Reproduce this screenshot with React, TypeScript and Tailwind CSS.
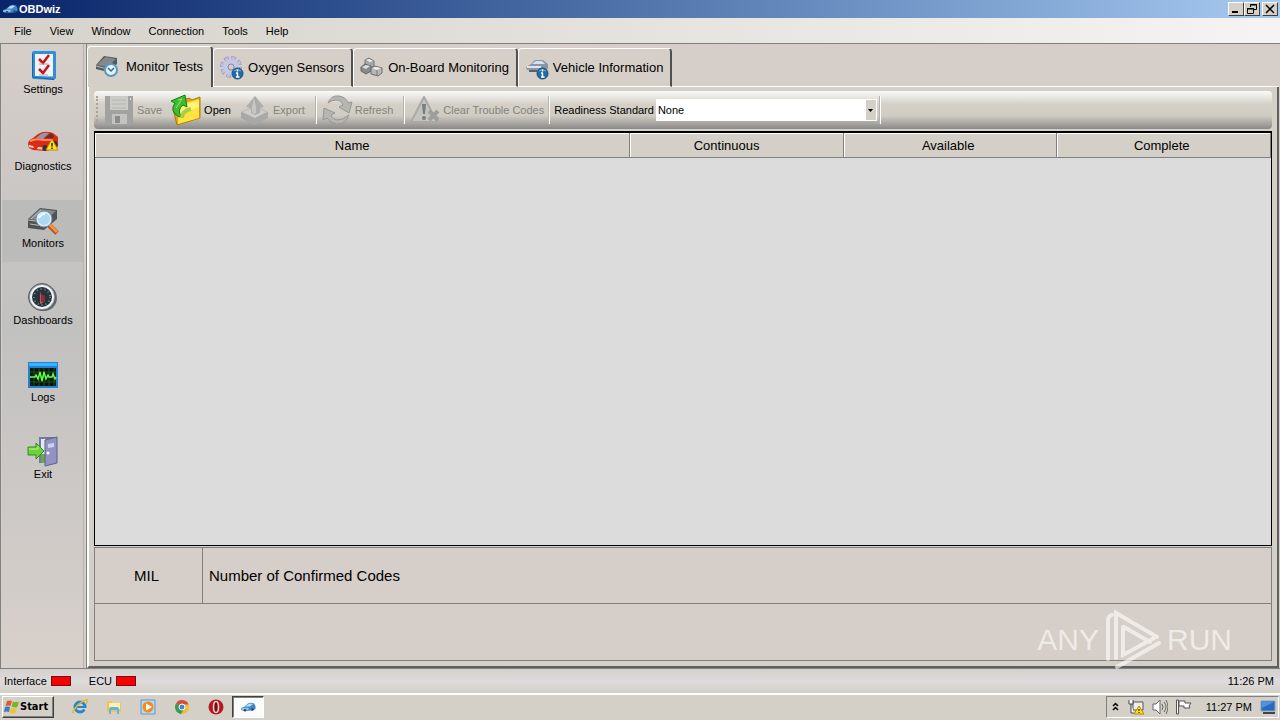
import type { ReactNode } from 'react'
import clsx from 'clsx'

const CarIcon = ({ className }: { className?: string }) => (
	<svg viewBox="0 0 16 16" className={className} aria-hidden="true">
		<path d="M1 9 4 8 8 4.500q3-1.500 6 0L15.500 7v3l-3 1.500-8 .5-3.500-1z" fill="#3f86c8" />
		<path d="m5 7.500 3.500-2.500q2-.8 4.500 0l-3 2.500z" fill="#b9dcf5" />
		<path d="m1 9.500 5-1 3 .5-1 2-4 .5-3-1z" fill="#8fc1ea" />
		<circle cx="5" cy="11.300" r="1.300" fill="#274a70" />
		<circle cx="12.500" cy="10.500" r="1.300" fill="#274a70" />
	</svg>
)

const SettingsIcon = () => (
	<svg viewBox="0 0 32 32" className="h-8 w-8" aria-hidden="true">
		<path d="M7 1h20q2 0 2 2v25l-2 2-20-1q-2 0-2-2V3q0-2 2-2z" fill="#2f8fd8" />
		<path d="M5.500 4v23l21.500 2.500" fill="none" stroke="#1766a8" />
		<path d="M8 4h18v22.500L8 26z" fill="#f1f2f6" />
		<path d="m12 9 4 4 6-8M12 19l4 4 6-8" fill="none" stroke="#c4161c" strokeWidth="2.500" />
		<path d="M12 14h9M12 25h9" stroke="#a9a9b2" />
	</svg>
)

const DiagnosticsIcon = () => (
	<svg viewBox="0 0 32 32" className="h-8 w-8" aria-hidden="true">
		<path d="M1 17q0-4 5-6l5-4q6-4 15-1l5 4v9l-4 3-8 2-13-1-4-2z" fill="#d92c15" />
		<path d="m9 11 5-4q5-2 8-1l-6 6z" fill="#8d9aaa" />
		<path d="m18 11 6-5 3 3-1 2z" fill="#6d2a28" />
		<path d="M3 14q6-3 14-1l7 0" fill="none" stroke="#ff8b66" strokeWidth="2" />
		<path d="m2 18 4 1 1 2-5-1zM11 20l5 .5-1 2-5-.5z" fill="#ffd7c0" />
		<ellipse cx="28" cy="18" rx="2.500" ry="4" fill="#333" />
		<ellipse cx="18" cy="21" rx="2.500" ry="3" fill="#333" />
		<path d="m25 12 6 11H19z" fill="#ffe51c" stroke="#c98b00" />
		<path d="M25 16v3.500M25 20.500v1.500" stroke="#222" strokeWidth="1.500" />
	</svg>
)

const MonitorsIcon = () => (
	<svg viewBox="0 0 32 32" className="h-8 w-8" aria-hidden="true">
		<path d="M1 15 13 4l17 2v9l-13 11-16-2z" fill="#505355" />
		<path d="M2 15 13 5l16 2-11 10z" fill="#85898b" />
		<path d="m4 15 10-9M1 16l16 2M3 20l13 2" stroke="#bbb" />
		<path d="m22 21 8 8" stroke="#b8501a" strokeWidth="5" />
		<path d="m22 20 8 8" stroke="#f69246" strokeWidth="3" />
		<circle cx="17" cy="15" r="7" fill="#a9d8f2" stroke="#e1e9ed" strokeWidth="2" />
		<circle cx="17" cy="15" r="8" fill="none" stroke="#6892ad" />
		<path d="M12 14q2-4 6-4" fill="none" stroke="#fff" strokeWidth="2" />
	</svg>
)

const DashboardsIcon = () => (
	<svg viewBox="0 0 32 32" className="h-8 w-8" aria-hidden="true">
		<circle cx="17" cy="17" r="13" fill="#646b70" />
		<circle cx="15" cy="16" r="13.500" fill="#929b9f" stroke="#555d62" />
		<circle cx="15" cy="16" r="11" fill="#27343c" stroke="#eef2f3" strokeWidth="2" />
		<circle cx="15" cy="16" r="8" fill="none" stroke="#72858e" strokeDasharray="1 3" strokeWidth="2" />
		<path d="m13 10 3 12-3 1z" fill="#da4c57" />
		<path d="M14 13v8h4v-6z" fill="#7b3442" />
	</svg>
)

const LogsIcon = () => (
	<svg viewBox="0 0 32 32" className="h-8 w-8" aria-hidden="true">
		<path d="M1 4h30v26H1z" fill="#1e83d8" />
		<path d="M2 5h28v3H2z" fill="#37b3ff" />
		<path d="M3 10h26v18H3z" fill="#061507" />
		<path d="M3 14h26M3 19h26M3 24h26M7 10v18M12 10v18M17 10v18M22 10v18M27 10v18" stroke="#175420" />
		<path d="M3 19h5l1-2 2 4 2-7 2 9 2-9 2 7 2-4 1 2h3l1-3 2 5 1-2" fill="none" stroke="#65fa4b" strokeWidth="1.500" />
	</svg>
)

const ExitIcon = () => (
	<svg viewBox="0 0 32 32" className="h-8 w-8" aria-hidden="true">
		<path d="M12 2h18v26H12z" fill="#77769c" />
		<path d="M14 4h12v21H14z" fill="#dcecf4" />
		<path d="M14 19h5v9h-5z" fill="#6ba84d" />
		<path d="m18 5 12-3v26l-12 3z" fill="#9292c3" stroke="#60608e" />
		<path d="m21 9 6-1v4l-6 1z" fill="#cfd0ef" />
		<circle cx="21" cy="18" r="1.500" fill="#fff" />
		<path d="M1 12h8V8l8 8-8 8v-4H1z" fill="#6bd238" stroke="#368c18" />
		<path d="M2 14h9v-3" fill="none" stroke="#bcf493" />
	</svg>
)

const InfoBadge = () => (
	<>
		<circle cx="17.500" cy="17.500" r="5.500" fill="#216ca4" stroke="#164d79" />
		<path d="M14 15q3-3 7 0" fill="none" stroke="#75b5dd" />
		<path d="M17.500 17v4M16 17h2M16 21h3.500M17.500 13.500v2" stroke="#fff" strokeWidth="1.500" />
	</>
)

const MonitorTestsIcon = () => (
	<svg viewBox="0 0 24 24" className="h-6 w-6" aria-hidden="true">
		<path d="M0 10 8 1l13 2v6l-9 8-12-3z" fill="#55585a" />
		<path d="m1 10 8-8 11 2-9 8z" fill="#85888a" />
		<path d="m0 11 11 3" stroke="#c2c2c2" />
		<circle cx="15" cy="15" r="6" fill="#e5f4fb" stroke="#5b99c1" strokeWidth="2" />
		<path d="m12 13 3 3 3-3" fill="none" stroke="#2b6a95" strokeWidth="1.500" />
	</svg>
)

const OxygenIcon = () => (
	<svg viewBox="0 0 24 24" className="h-6 w-6" aria-hidden="true">
		<circle cx="11" cy="11" r="9" fill="none" stroke="#9091b8" strokeWidth="4" strokeDasharray="4.500 2.570" />
		<circle cx="11" cy="11" r="9" fill="none" stroke="#bfc0df" strokeWidth="3" strokeDasharray="3.500 3.570" strokeDashoffset="-.5" />
		<circle cx="11" cy="11" r="5.500" fill="none" stroke="#c6c7e4" strokeWidth="5" />
		<circle cx="11" cy="11" r="3" fill="#d4d0c8" stroke="#8585aa" />
		<InfoBadge />
	</svg>
)

const OnBoardIcon = () => (
	<svg viewBox="0 0 24 24" className="h-6 w-6" aria-hidden="true">
		<path d="m5 4 4-2 5 3v5l-4 2-5-3z" fill="#a7a7a7" stroke="#777" />
		<path d="m1 11 4-3 6 2v5l-5 3-5-3z" fill="#8a8a8a" stroke="#666" />
		<path d="m2 11 4-2 4 1-4 3z" fill="#dedede" />
		<path d="m11 12 4-2 7 2v5l-4 3-7-2z" fill="#b7b7b7" stroke="#6e6e6e" />
		<path d="m12 12 4-1 5 1-4 2zM6 4l3-1 4 2-3 1z" fill="#eee" />
		<path d="M17 14v5" stroke="#777" />
	</svg>
)

const VehicleIcon = () => (
	<svg viewBox="0 0 24 24" className="h-6 w-6" aria-hidden="true">
		<path d="m1 11 5-3 4-4h8l5 4v5l-6 2-15-1z" fill="#8995aa" />
		<path d="m7 8 4-3h6l3 3z" fill="#d7e2f0" />
		<path d="M2 11h14" stroke="#dfe4ee" strokeWidth="2" />
		<path d="M4 15h8" stroke="#59616f" strokeWidth="2" />
		<InfoBadge />
	</svg>
)

const SaveIcon = () => (
	<svg viewBox="0 0 32 32" className="h-8 w-8" aria-hidden="true">
		<path d="M2 2h28v28H4l-2-2z" fill="#a2a2a0" />
		<path d="M7 2h18v14H7z" fill="#cbcbc8" />
		<path d="M9 6h14M9 10h14M9 14h14" stroke="#b4b4b0" />
		<path d="M9 20h15v10H9z" fill="#c3c3c0" />
		<path d="M12 22h5v7h-5z" fill="#8c8c89" />
		<path d="M27 4h1v2h-1z" fill="#ddd" />
	</svg>
)

const OpenIcon = () => (
	<svg viewBox="0 0 32 32" className="h-8 w-8" aria-hidden="true">
		<path d="m9 7 10-3 3 2 8-3v21L7 31 3 15z" fill="#d9a817" stroke="#b07b0b" />
		<path d="m8 11 21-6v19L8 30z" fill="#ffe340" />
		<path d="m9 12 20-5v6L9 20z" fill="#fff380" />
		<path d="M9 23Q-1 17 5 9L1 7l14-6 2 12-4-2q-6 5-2 11z" fill="#3dbc2d" stroke="#187b18" />
		<path d="m8 6 4-1-6 9" fill="none" stroke="#92ed69" />
		<path d="M12 24q0-7 9-9" fill="none" stroke="#a8ce47" strokeWidth="4" />
	</svg>
)

const ExportIcon = () => (
	<svg viewBox="0 0 32 32" className="h-8 w-8" aria-hidden="true">
		<path d="m2 18 14-6 13 6v6l-13 7-14-7z" fill="#a8a8a6" />
		<path d="m3 18 13-5 12 5-12 6z" fill="#cdcdcb" />
		<path d="M16 2 25 13l-4 1v5l-5 2-4-2v-5l-5-1z" fill="#acaca9" />
		<path d="m15 4 2 9v6l-2 1-2-2v-5z" fill="#c6c6c3" />
	</svg>
)

const RefreshIcon = () => (
	<svg viewBox="0 0 32 32" className="h-8 w-8" fill="#b6b6b3" stroke="#969692" aria-hidden="true">
		<path d="M7 9Q10 1 18 2q7 1 9 7l4-1-3 11-10-6 4-2q-2-5-7-5-4 0-8 3z" />
		<path d="M28 21q-3 9-12 9-7-1-10-6l-4 2 1-12 11 5-4 2q2 5 7 5 5 0 11-5z" />
	</svg>
)

const ClearIcon = () => (
	<svg viewBox="0 0 32 32" className="h-8 w-8" aria-hidden="true">
		<path d="M15 3 28 28H2z" fill="#c3c3bf" stroke="#aaa9a5" strokeWidth="2" strokeLinejoin="round" />
		<path d="M13 10h4l-1 10h-2z" fill="#7c7c7a" />
		<circle cx="15" cy="24" r="2" fill="#7c7c7a" />
		<path d="m20 17 9 9m0-9-9 9" stroke="#9e9e9a" strokeWidth="4" />
	</svg>
)

const sideItems = [
	{ label: 'Settings', icon: <SettingsIcon /> },
	{ label: 'Diagnostics', icon: <DiagnosticsIcon /> },
	{ label: 'Monitors', icon: <MonitorsIcon />, active: true },
	{ label: 'Dashboards', icon: <DashboardsIcon /> },
	{ label: 'Logs', icon: <LogsIcon /> },
	{ label: 'Exit', icon: <ExitIcon /> }
]

const tabs = [
	{ label: 'Monitor Tests', icon: <MonitorTestsIcon />, active: true },
	{ label: 'Oxygen Sensors', icon: <OxygenIcon /> },
	{ label: 'On-Board Monitoring', icon: <OnBoardIcon /> },
	{ label: 'Vehicle Information', icon: <VehicleIcon /> }
]

const WindowButton = ({ label, children }: { label: string; children: ReactNode }) => (
	<button
		aria-label={label}
		className="h-3.5 w-4 border border-t-white border-r-[#404040] border-b-[#404040] border-l-white bg-[#d4d0c8]"
	>
		<svg viewBox="0 0 14 12" className="h-3 w-3.5" fill="none" stroke="#000" aria-hidden="true">
			{children}
		</svg>
	</button>
)

const ToolButton = ({
	label,
	icon,
	disabled
}: {
	label: string
	icon: ReactNode
	disabled?: boolean
}) => (
	<button
		disabled={disabled}
		className="flex items-center gap-0.5 whitespace-nowrap text-black disabled:text-[#85837e]"
	>
		{icon}
		{label}
	</button>
)

const ToolSeparator = () => (
	<div className="h-7 w-0.5 border-l border-r border-l-[#b5b3ae] border-r-white" />
)

const TitleBar = () => (
	<header className="flex h-[18px] items-center bg-linear-to-r from-[#0a246a] to-[#a6caf0] px-0.5 text-white">
		<CarIcon className="h-4 w-4" />
		<h1 className="ml-px font-bold">OBDwiz</h1>
		<div className="ml-auto flex">
			<WindowButton label="Minimize">
				<path d="M3 9h6" strokeWidth="2" />
			</WindowButton>
			<WindowButton label="Restore">
				<path d="M5.500 4V1.500h6v5H9M5 2h7M2.500 5.500h6v5h-6zM2 6h7" />
			</WindowButton>
			<div className="ml-0.5 flex">
				<WindowButton label="Close">
					<path d="m3 2 8 8m0-8-8 8" strokeWidth="1.500" />
				</WindowButton>
			</div>
		</div>
	</header>
)

const MenuBar = () => (
	<nav className="flex h-[26px] items-center gap-[18px] border-b border-[#808080] bg-linear-to-r from-[#d6d2cb] to-[#f5f4f2] pl-3.5">
		{['File', 'View', 'Window', 'Connection', 'Tools', 'Help'].map((item) => (
			<button key={item}>{item}</button>
		))}
	</nav>
)

const Sidebar = () => (
	<nav className="w-[87px] shrink-0 border-r border-l border-[#808080] bg-[#d4d0c8] pr-0.5 pl-px">
		<div className="flex h-full flex-col gap-[15px] border-r border-[#b5b2ad] bg-linear-to-b from-[#d6cec9] via-[#c1c1c0] via-45% to-[#d8d0cb] pt-0.5">
			{sideItems.map(({ label, icon, active }) => (
				<button
					key={label}
					className={clsx(
						'flex h-[62px] w-full flex-col items-center pt-1 pl-px leading-3',
						active && 'bg-[#bbbbba]'
					)}
				>
					{icon}
					<span className="mt-px">{label}</span>
				</button>
			))}
		</div>
	</nav>
)

const Tabs = () => (
	<div role="tablist" className="flex items-end text-[13px]">
		{tabs.map(({ label, icon, active }) => (
			<button
				key={label}
				role="tab"
				aria-selected={!!active}
				className={clsx(
					'flex items-center rounded-t-sm border-t border-l border-t-white border-l-white border-r-2 border-r-[#505050] whitespace-nowrap',
					active
						? 'h-[41px] gap-1.5 bg-[#d4d0c8] px-2'
						: 'h-[39px] gap-1 border-b border-b-white bg-[#d6cfc8] pr-[7px] pl-1.5'
				)}
			>
				{icon}
				{label}
			</button>
		))}
		<div className="flex-1 border-b border-white" />
	</div>
)

const Toolbar = () => (
	<div
		role="toolbar"
		className="flex h-[38px] shrink-0 items-center rounded bg-[linear-gradient(to_bottom,#fbfaf9,#d4d0c8_35%,#cfccc4_65%,#8b8987)] pl-0.5"
	>
		<div className="mr-[5px] h-7 border-l-2 border-dotted border-[#a5a39e]" />
		<ToolButton label="Save" icon={<SaveIcon />} disabled />
		<div className="ml-2">
			<ToolButton label="Open" icon={<OpenIcon />} />
		</div>
		<div className="mr-2.5 ml-2">
			<ToolButton label="Export" icon={<ExportIcon />} disabled />
		</div>
		<ToolSeparator />
		<div className="mr-2.5 ml-1">
			<ToolButton label="Refresh" icon={<RefreshIcon />} disabled />
		</div>
		<ToolSeparator />
		<div className="mr-1 ml-1">
			<ToolButton label="Clear Trouble Codes" icon={<ClearIcon />} disabled />
		</div>
		<ToolSeparator />
		<label htmlFor="standard" className="mr-0.5 ml-1 whitespace-nowrap">
			Readiness Standard
		</label>
		<div className="relative mr-0.5 h-[22px] w-[221px] bg-white">
			<select id="standard" className="h-full w-full appearance-none px-0.5 outline-none">
				<option>None</option>
			</select>
			<div className="pointer-events-none absolute top-px right-px flex h-5 w-2.5 items-center justify-center bg-[#d4d0c8]">
				<svg viewBox="0 0 5 3" className="h-[3px] w-[5px]" aria-hidden="true">
					<path d="M0 0h5L2.500 3z" />
				</svg>
			</div>
		</div>
		<ToolSeparator />
	</div>
)

const columns = [
	{ name: 'Name', className: 'w-[45.5%] pr-5' },
	{ name: 'Continuous', className: 'pr-5' },
	{ name: 'Available', className: 'pr-1' },
	{ name: 'Complete', className: 'pr-1' }
]

const MonitorTable = () => (
	<div className="mt-0.5 flex-1 border border-t-2 border-black bg-[#dcdcdc]">
		<table className="w-full table-fixed border-collapse text-[13px]">
			<thead>
				<tr className="h-6 border-b border-[#808080] bg-[#d4d0c8]">
					{columns.map(({ name, className }) => (
						<th
							key={name}
							className={clsx(
								'border-t border-r border-t-white border-r-[#808080] font-normal shadow-[inset_1px_0_0_#fff]',
								className
							)}
						>
							{name}
						</th>
					))}
				</tr>
			</thead>
			<tbody />
		</table>
	</div>
)

const MilPanel = () => (
	<section className="mt-px border border-[#808080] bg-[#d6cec8] text-[15px]">
		<div className="flex h-14 border-b border-[#808080]">
			<div className="flex w-[108px] items-center justify-center border-r border-[#808080] pr-1">
				MIL
			</div>
			<div className="flex items-center pl-1.5">Number of Confirmed Codes</div>
		</div>
		<div className="h-14" />
	</section>
)

const Watermark = () => (
	<div className="pointer-events-none absolute right-12 -bottom-1 flex items-center gap-1 text-[30px] leading-[60px] text-white/60">
		<span>ANY</span>
		<svg viewBox="0 0 60 64" className="h-16 w-[60px]" fill="none" stroke="currentColor" aria-hidden="true">
			<path d="M5 51V12q0-4 4-5M13 50V5l41 24M20 19v28l33-18M14 59l42-24M21 19l26 15" strokeWidth="4" strokeLinecap="round" />
		</svg>
		<span>RUN</span>
	</div>
)

const StatusBar = () => (
	<footer className="flex h-[25px] shrink-0 items-center border-t border-[#808080] bg-linear-to-b from-[#d4d0cc] via-[#dddbdc] to-[#d4d0c8] pr-1.5 pb-px pl-1">
		<span>Interface</span>
		<div className="ml-1 h-2.5 w-5 border border-[#701010] bg-[#fb0000]" />
		<span className="ml-[18px]">ECU</span>
		<div className="ml-1 h-2.5 w-5 border border-[#701010] bg-[#fb0000]" />
		<time className="ml-auto">11:26 PM</time>
	</footer>
)

const quickLaunch = [
	{
		label: 'Internet Explorer',
		icon: (
			<>
				<circle cx="8" cy="8" r="5" fill="none" stroke="#2586cf" strokeWidth="3" />
				<path d="M4 8h9" stroke="#2586cf" strokeWidth="2" />
				<path d="M10 9h5v3z" fill="#d4d0c8" />
				<path d="M2 14Q-1 14 5 7q6-6 10-6 1 1-1 4" fill="none" stroke="#e9b52e" strokeWidth="1.500" />
			</>
		)
	},
	{
		label: 'Explorer',
		icon: (
			<>
				<path d="M1 2h5l1 2h8v9H1z" fill="#e7c563" />
				<path d="M3 4h11v6H3z" fill="#fff1a9" />
				<path d="M3 15v-5q0-2 2-2h6q2 0 2 2v5h-2v-4H5v4z" fill="#60b5df" />
			</>
		)
	},
	{
		label: 'Media Player',
		icon: (
			<>
				<path d="M1 1h14v14H1z" fill="#b9d8ef" stroke="#5897cf" />
				<circle cx="8" cy="8" r="5.500" fill="#f28c1d" />
				<path d="m6 4.500 6 3.500-6 3.500z" fill="#fff" />
			</>
		)
	},
	{
		label: 'Chrome',
		icon: (
			<>
				<circle cx="8" cy="8" r="7" fill="#eebf32" />
				<path d="M8 8 2 4.500a7 7 0 0 1 12.500 1H8z" fill="#da4b3b" />
				<path d="M2 4.500A7 7 0 0 0 7 15l3-5-2-2z" fill="#359c57" />
				<circle cx="8" cy="8" r="3" fill="#4285dd" stroke="#fff" />
			</>
		)
	},
	{
		label: 'Opera',
		icon: (
			<>
				<circle cx="8" cy="8" r="7.500" fill="#b8171d" />
				<ellipse cx="8" cy="8" rx="2.500" ry="5.500" fill="#781014" stroke="#f2d7d7" strokeWidth="1.500" />
			</>
		)
	}
]

const Taskbar = () => (
	<footer className="flex h-[27px] shrink-0 items-center border-t-2 border-t-white bg-[#d4d0c8] pb-0.5 pl-0.5">
		<button className="flex h-[22px] w-[52px] items-center border border-t-white border-r-[#404040] border-b-[#404040] border-l-white pl-px font-['DejaVu_Sans_Condensed','DejaVu_Sans',sans-serif] font-bold shadow-[inset_-1px_-1px_0_#808080]">
			<svg viewBox="0 0 16 16" className="h-4 w-4 shrink-0" aria-hidden="true">
				<path d="M3 2q3-1 5 0L6.500 7q-2-1-5 0z" fill="#e85826" />
				<path d="M9 2.500q2 1 6 0L13.500 8q-3 1-6-.5z" fill="#76b82a" />
				<path d="M1 8q3-1 5 0l-1 5q-2-1-5 0z" fill="#347fc5" />
				<path d="M7 9q3 1 6 0l-1.500 5q-3 1-6-.5z" fill="#f2c22e" />
			</svg>
			Start
		</button>
		<div className="ml-[18px] flex gap-[18px]">
			{quickLaunch.map(({ label, icon }) => (
				<button key={label} aria-label={label}>
					<svg viewBox="0 0 16 16" className="h-4 w-4" aria-hidden="true">
						{icon}
					</svg>
				</button>
			))}
		</div>
		<button
			aria-label="OBDwiz"
			className="ml-2 flex h-[22px] w-8 items-center justify-center border border-t-[#404040] border-r-white border-b-white border-l-[#404040] bg-[#fbfbfa] shadow-[inset_1px_1px_0_#808080]"
		>
			<CarIcon className="h-4 w-4" />
		</button>
		<div className="mr-px ml-auto flex h-[22px] items-center gap-2 border border-t-[#808080] border-r-white border-b-white border-l-[#808080] pr-0.5 pl-1">
			<button aria-label="Show hidden icons">
				<svg viewBox="0 0 9 9" className="h-[9px] w-[9px]" fill="none" stroke="#000" strokeWidth="1.500" aria-hidden="true">
					<path d="m2 4 2.500-2.500L7 4M2 8l2.500-2.500L7 8" />
				</svg>
			</button>
			<svg viewBox="0 0 16 16" className="h-4 w-4" aria-hidden="true">
				<path d="M5 3h10v8H5z" fill="#eee" stroke="#555" />
				<path d="M1 1v4h4V1M3 5v9h3" fill="#fff" stroke="#444" />
				<path d="m11 7 5 8H6z" fill="#ffdf20" stroke="#b58a00" />
				<path d="M11 10v2M11 13v1" stroke="#000" />
			</svg>
			<svg viewBox="0 0 16 16" className="h-4 w-4" fill="none" stroke="#666" aria-hidden="true">
				<path d="M1 5h3l4-4v14l-4-4H1z" fill="#fff" />
				<path d="M10 5q2 3 0 6M12 3q4 5 0 10M14 1q4 7 0 14" />
			</svg>
			<svg viewBox="0 0 16 16" className="h-4 w-4" fill="#fff" stroke="#555" aria-hidden="true">
				<path d="M2.500 1v14h-2V1zM3 2h6v2h6l-2 3 1 2H8V7H3z" />
			</svg>
			<time className="ml-1.5">11:27 PM</time>
			<svg viewBox="0 0 16 16" className="h-4 w-4" aria-hidden="true">
				<path d="M1 2h14v10H1z" fill="#256bc0" stroke="#8aa1bd" />
				<path d="M2 3h12L2 9z" fill="#4c94df" />
				<path d="M3 14h12" stroke="#444" strokeWidth="2" />
			</svg>
		</div>
	</footer>
)

const App = () => {
	return (
		<div className="flex h-screen flex-col bg-[#d4d0c8] font-['Liberation_Sans',Arial,sans-serif] text-[11px] leading-4 text-black">
			<TitleBar />
			<MenuBar />
			<div className="flex min-h-0 flex-1">
				<Sidebar />
				<main className="relative flex min-w-0 flex-1 flex-col bg-[#d6cec8] pt-0.5 pr-px">
					<Tabs />
					<div className="flex flex-1 flex-col border-r-2 border-b-2 border-l-2 border-r-[#606060] border-b-[#606060] border-l-white bg-[#d4d0c8] px-[5px] pt-1 pb-[5px]">
						<Toolbar />
						<MonitorTable />
						<MilPanel />
					</div>
					<Watermark />
				</main>
			</div>
			<StatusBar />
			<Taskbar />
		</div>
	)
}

export default App
